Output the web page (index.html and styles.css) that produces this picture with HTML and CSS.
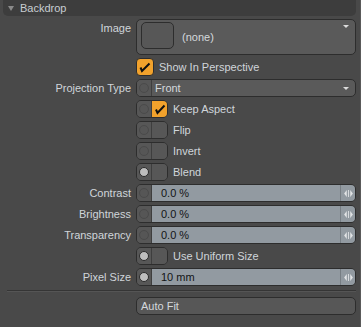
FILE: index.html
```html
<!DOCTYPE html>
<html lang="en">
<head>
<meta charset="utf-8" />
<title>Backdrop</title>
<link rel="stylesheet" href="styles.css">
</head>
<body>
<div class="panel">
	<div class="head"><span class="caret"></span>Backdrop</div>
	<div class="props">
		<div class="lbl">Image</div>
		<div class="picker">
			<span class="thumb"></span>
			<span class="picker-text">(none)</span>
			<span class="arrow"></span>
		</div>

		<div class="ctl">
			<span class="check on"><svg viewBox="0 0 16 16"><path d="M3.5 8.5 L5 12 L12.5 4.5" /></svg></span>
			<span class="opt">Show In Perspective</span>
		</div>

		<div class="lbl">Projection Type</div>
		<div class="select">
			<span class="seg"><i class="dot"></i></span>
			<span class="select-text">Front</span>
			<span class="arrow"></span>
		</div>

		<div class="ctl">
			<span class="toggle"><span class="seg"><i class="dot"></i></span><span class="box on"><svg viewBox="0 0 14 16"><path d="M3 8.5 L4.5 12 L11.5 4.5" /></svg></span></span>
			<span class="opt">Keep Aspect</span>
		</div>
		<div class="ctl">
			<span class="toggle"><span class="seg"><i class="dot"></i></span><span class="box"></span></span>
			<span class="opt">Flip</span>
		</div>
		<div class="ctl">
			<span class="toggle"><span class="seg"><i class="dot"></i></span><span class="box"></span></span>
			<span class="opt">Invert</span>
		</div>
		<div class="ctl">
			<span class="toggle"><span class="seg"><i class="dot set"></i></span><span class="box"></span></span>
			<span class="opt">Blend</span>
		</div>

		<div class="lbl">Contrast</div>
		<div class="num">
			<span class="seg"><i class="dot"></i></span>
			<span class="val">0.0 %</span>
			<span class="spin"><svg viewBox="0 0 10 8"><path d="M3 0 L0 4 L3 8 Z M7 0 L10 4 L7 8 Z M4.5 0 h1 v8 h-1 Z" /></svg></span>
		</div>
		<div class="lbl">Brightness</div>
		<div class="num">
			<span class="seg"><i class="dot"></i></span>
			<span class="val">0.0 %</span>
			<span class="spin"><svg viewBox="0 0 10 8"><path d="M3 0 L0 4 L3 8 Z M7 0 L10 4 L7 8 Z M4.5 0 h1 v8 h-1 Z" /></svg></span>
		</div>
		<div class="lbl">Transparency</div>
		<div class="num">
			<span class="seg"><i class="dot"></i></span>
			<span class="val">0.0 %</span>
			<span class="spin"><svg viewBox="0 0 10 8"><path d="M3 0 L0 4 L3 8 Z M7 0 L10 4 L7 8 Z M4.5 0 h1 v8 h-1 Z" /></svg></span>
		</div>

		<div class="ctl">
			<span class="toggle"><span class="seg"><i class="dot set"></i></span><span class="box"></span></span>
			<span class="opt">Use Uniform Size</span>
		</div>

		<div class="lbl">Pixel Size</div>
		<div class="num">
			<span class="seg"><i class="dot set"></i></span>
			<span class="val">10 mm</span>
			<span class="spin"><svg viewBox="0 0 10 8"><path d="M3 0 L0 4 L3 8 Z M7 0 L10 4 L7 8 Z M4.5 0 h1 v8 h-1 Z" /></svg></span>
		</div>

		<div class="sep"></div>

		<div class="ctl"><span class="btn">Auto Fit</span></div>
	</div>
</div>
</body>
</html>
```

FILE: styles.css
```css
*{box-sizing:border-box;}
html, body{margin:0; padding:0; background:#494949; height:100%;}
body{font-family:"Liberation Sans", Arial, sans-serif; font-size:11px; color:#d0d5da;}
.panel{width:361px; height:100%; border-right:1px solid #5a5a5a;}
.head{height:16px; margin:0 4px 3px 3px; background:#3d3d3d; border-radius:0 0 5px 5px; line-height:15px; color:#c8cdd2; display:flex; align-items:center;}
.caret{width:0; height:0; border-left:3px solid transparent; border-right:3px solid transparent; border-top:5px solid #8a8a8a; margin:1px 6px 0 5px;}
.props{display:grid; grid-template-columns:131px 220px; column-gap:5px; row-gap:3px;}
.lbl{grid-column:1; text-align:right; line-height:18px; height:18px; white-space:nowrap;}
.ctl{grid-column:2; display:flex; align-items:center; height:18px;}
.opt{margin-left:5px; line-height:18px;}

.picker{grid-column:2; height:36px; border:1px solid #2d2d2d; border-radius:5px; background:#5a5a5a; display:flex; align-items:center; position:relative; padding-left:4px;}
.thumb{width:33px; height:27px; border:1px solid #2d2d2d; border-radius:5px; background:#575757; margin-top:-3px;}
.picker-text{margin-left:8px; color:#d4d8dc;}
.arrow{position:absolute; right:6px; width:0; height:0; border-left:3px solid transparent; border-right:3px solid transparent; border-top:3px solid #dcdcdc;}
.picker .arrow{top:5px;}
.select .arrow{top:7px;}

.select{grid-column:2; height:18px; border:1px solid #2d2d2d; border-radius:5px; background:#5a5a5a; display:flex; align-items:center; position:relative; overflow:hidden;}
.select-text{margin-left:3px; color:#d4d8dc;}

.seg{width:15px; height:100%; background:#575757; border-right:1px solid #3e3e3e; display:flex; align-items:center; justify-content:center; flex:none;}
.dot{display:block; width:10px; height:10px; border-radius:50%; border:1px solid #4b4b4b; background:#565656;}
.dot.set{background:#bdbdbd; border-color:#2a2a2a;}

.check{width:18px; height:18px; border:1px solid #2d2d2d; border-radius:4px; background:#575757; display:flex; align-items:center; justify-content:center;}
.check.on, .box.on{background:#f2a22c;}
.check svg{width:16px; height:16px;}
svg path{fill:none; stroke:#111; stroke-width:2;}

.toggle{display:flex; width:32px; height:18px; border:1px solid #2d2d2d; border-radius:5px; overflow:hidden;}
.box{flex:1; background:#575757; display:flex; align-items:center; justify-content:center;}
.box svg{width:14px; height:16px;}

.num{grid-column:2; display:flex; height:18px; border:1px solid #2d2d2d; border-radius:5px; overflow:hidden;}
.val{flex:1; background:#929aa1; color:#121416; padding-left:9px; line-height:16px;}
.spin{width:15px; background:#929aa1; border-left:1px solid #777e84; display:flex; align-items:center; justify-content:center;}
.spin svg{width:9px; height:7px;}
.spin svg path{fill:#e2e4e6; stroke:none;}

.sep{grid-column:1 / -1; margin:1px 0 2px 7px; height:2px; border-top:1px solid #353535; border-bottom:1px solid #555;}
.btn{width:220px; height:18px; border:1px solid #2d2d2d; border-radius:5px; background:#575757; padding-left:4px; line-height:16px; color:#d4d8dc;}
```
